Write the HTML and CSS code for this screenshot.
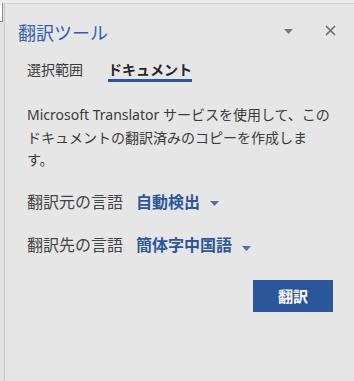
FILE: index.html
```html
<!DOCTYPE html>
<html lang="ja">
<head>
<meta charset="utf-8">
<title>翻訳ツール</title>
<link rel="stylesheet" href="styles.css">
</head>
<body>
<div class="window">
  <div class="gutter"><div class="nub"></div></div>
  <div class="pane">
    <header class="header">
      <h1 class="title">翻訳ツール</h1>
      <div class="header-icons">
        <svg class="icon-menu" width="9" height="5" viewBox="0 0 9 5"><polygon points="0,0 9,0 4.5,5" fill="#7a7a7a"/></svg>
        <svg class="icon-close" width="11" height="11" viewBox="0 0 11 11"><path d="M1 1L10 10M10 1L1 10" stroke="#6a6a6a" stroke-width="1.6" fill="none"/></svg>
      </div>
    </header>
    <nav class="tabs">
      <span class="tab">選択範囲</span>
      <span class="tab tab-active">ドキュメント</span>
    </nav>
    <p class="desc">Microsoft Translator サービスを使用して、このドキュメントの翻訳済みのコピーを作成します。</p>
    <div class="row row-from">
      <span class="label">翻訳元の言語</span>
      <span class="value">自動検出</span>
      <svg class="caret" width="9" height="5" viewBox="0 0 9 5"><polygon points="0,0 9,0 4.5,5" fill="#4e74ad"/></svg>
    </div>
    <div class="row row-to">
      <span class="label">翻訳先の言語</span>
      <span class="value">簡体字中国語</span>
      <svg class="caret" width="9" height="5" viewBox="0 0 9 5"><polygon points="0,0 9,0 4.5,5" fill="#4e74ad"/></svg>
    </div>
    <div class="actions">
      <button class="btn">翻訳</button>
    </div>
  </div>
</div>
</body>
</html>
```

FILE: styles.css
```css
html, body {
  margin: 0;
  padding: 0;
}
body {
  width: 354px;
  height: 381px;
  overflow: hidden;
  background: #e6e6e6;
  font-family: "Noto Sans", "Noto Sans CJK JP", sans-serif;
  color: #3c3c3c;
}
.window {
  display: flex;
  height: 381px;
  border-top: 3px solid #ececec;
  box-sizing: border-box;
}
.gutter {
  width: 4px;
  background: #e2e2e2;
  border-right: 1px solid #c8c8c8;
  flex: none;
}
.nub {
  width: 2px;
  height: 18px;
  background: #ffffff;
  border-right: 1px solid #8a8a8a;
  border-bottom: 1px solid #8a8a8a;
}
.pane {
  flex: 1;
  border-top: 1px solid #d3d3d3;
  display: flex;
  flex-direction: column;
}
.header {
  display: flex;
  align-items: center;
  padding-top: 16px;
  padding-left: 13px;
  height: 24px;
}
.title {
  margin: 0;
  font-family: "Noto Sans CJK JP", sans-serif;
  font-size: 18px;
  line-height: 24px;
  font-weight: 400;
  color: #2f62ae;
}
.header-icons {
  margin-left: auto;
  display: flex;
  align-items: center;
  margin-right: 18px;
  gap: 32px;
}
.icon-menu {
  display: block;
  margin-top: -2px;
}
.icon-close {
  display: block;
  margin-top: -4px;
}
.tabs {
  display: flex;
  gap: 25px;
  padding-left: 22px;
  margin-top: 15px;
}
.tab {
  font-family: "Noto Sans CJK JP", sans-serif;
  font-size: 14px;
  line-height: 20px;
  color: #3a3a3a;
  border-bottom: 3px solid transparent;
}
.tab-active {
  font-weight: 700;
  color: #262626;
  border-bottom-color: #2b579a;
}
.desc {
  margin: 22px 24px 0 22px;
  font-size: 14px;
  line-height: 22.5px;
  color: #3a3a3a;
}
.row {
  display: flex;
  align-items: center;
  padding-left: 22px;
  font-family: "Noto Sans CJK JP", sans-serif;
  font-size: 16px;
  line-height: 24px;
}
.row-from {
  margin-top: 17px;
}
.row-to {
  margin-top: 19px;
}
.label {
  color: #444444;
}
.value {
  margin-left: 13px;
  font-weight: 700;
  color: #2b579a;
}
.caret {
  display: block;
  margin-left: 10px;
  margin-top: 6px;
}
.row-to .caret {
  margin-top: 10px;
}
.actions {
  display: flex;
  justify-content: flex-end;
  margin-top: 24px;
  padding-right: 21px;
}
.btn {
  width: 80px;
  height: 32px;
  border: none;
  background: #2b579a;
  color: #ffffff;
  font-family: "Noto Sans CJK JP", sans-serif;
  font-size: 15px;
  font-weight: 700;
  padding: 0;
}
```
